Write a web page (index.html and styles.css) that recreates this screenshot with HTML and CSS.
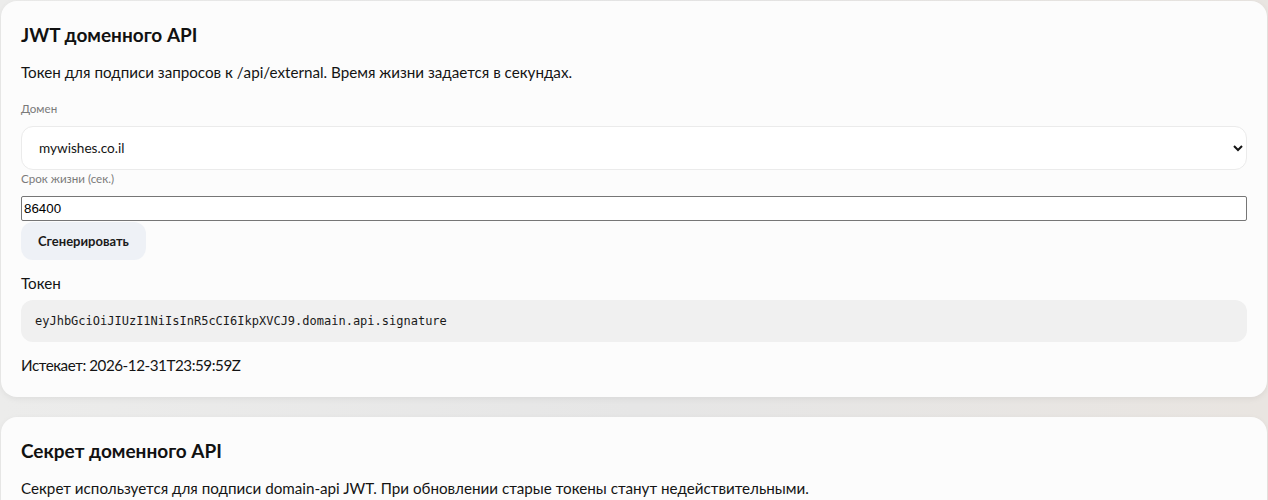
FILE: index.html
```html
<!DOCTYPE html>
<html lang="ru">
<head>
<meta charset="utf-8">
<title>Domain API</title>
<link rel="stylesheet" href="styles.css">
</head>
<body>
<div class="page">
  <section class="card">
    <h2 class="card-title">JWT доменного API</h2>
    <p class="card-desc">Токен для подписи запросов к /api/external. Время жизни задается в секундах.</p>
    <label class="field-label" for="domain">Домен</label>
    <select class="select" id="domain">
      <option>mywishes.co.il</option>
    </select>
    <label class="field-label field-label-tight" for="ttl">Срок жизни (сек.)</label>
    <input class="input" id="ttl" type="text" value="86400">
    <button class="btn" type="button">Сгенерировать</button>
    <div class="token-label">Токен</div>
    <div class="token-box">eyJhbGciOiJIUzI1NiIsInR5cCI6IkpXVCJ9.domain.api.signature</div>
    <div class="expires">Истекает: 2026-12-31T23:59:59Z</div>
  </section>
  <section class="card">
    <h2 class="card-title">Секрет доменного API</h2>
    <p class="card-desc">Секрет используется для подписи domain-api JWT. При обновлении старые токены станут недействительными.</p>
  </section>
</div>
</body>
</html>
```
FILE: styles.css
```css
* { box-sizing: border-box; }
html, body { margin: 0; }
body {
  background: linear-gradient(90deg, #ececeb 0%, #e6e6e6 50%, #e9e5e1 100%);
  font-family: Lato, "Liberation Sans", sans-serif;
  color: #141414;
}
.page {
  padding: 1px 1px 0;
  display: flex;
  flex-direction: column;
  gap: 20px;
}
.card {
  background: #fcfcfc;
  border-radius: 16px;
  padding: 21px 20px 20px;
  box-shadow: 0 2px 6px rgba(0, 0, 0, 0.06);
  display: flex;
  flex-direction: column;
  align-items: flex-start;
}
.card-title {
  margin: 0;
  font-size: 19px;
  font-weight: 700;
  line-height: 26px;
  color: #111;
}
.card-desc {
  margin: 12px 0 0;
  font-size: 15.2px;
  line-height: 24px;
}
.field-label {
  margin-top: 16px;
  margin-bottom: 8px;
  font-size: 11.6px;
  line-height: 18px;
  color: #7a7a7a;
}
.field-label-tight { margin-top: 0; margin-bottom: 8px; }
.select {
  width: 100%;
  height: 44px;
  border: 1px solid #ebebeb;
  border-radius: 12px;
  background: #ffffff;
  padding: 0 12px 0 13px;
  font-family: Lato, "Liberation Sans", sans-serif;
  font-size: 13.6px;
  color: #141414;
}
.input {
  width: 100%;
  height: 25px;
  border: 1px solid #767676;
  border-radius: 2px;
  padding: 1px 2px;
  background: #fff;
  font-family: "Liberation Sans", Arial, sans-serif;
  font-size: 13.33px;
  color: #000;
}
.btn {
  margin-top: 1px;
  height: 38px;
  padding: 0 17px;
  border: 0;
  border-radius: 12px;
  background: #eef1f6;
  font-family: Lato, "Liberation Sans", sans-serif;
  font-size: 13px;
  font-weight: 700;
  color: #1a1a1a;
}
.token-label {
  margin-top: 11px;
  font-size: 15.2px;
  line-height: 24px;
}
.token-box {
  margin-top: 5px;
  width: 100%;
  height: 42px;
  display: flex;
  align-items: center;
  padding: 0 14px;
  background: #f0f0f0;
  border-radius: 12px;
  font-family: "DejaVu Sans Mono", monospace;
  font-size: 12px;
  color: #1a1a1a;
}
.expires {
  margin-top: 11px;
  font-size: 15.2px;
  line-height: 24px;
  letter-spacing: -0.45px;
}
```
